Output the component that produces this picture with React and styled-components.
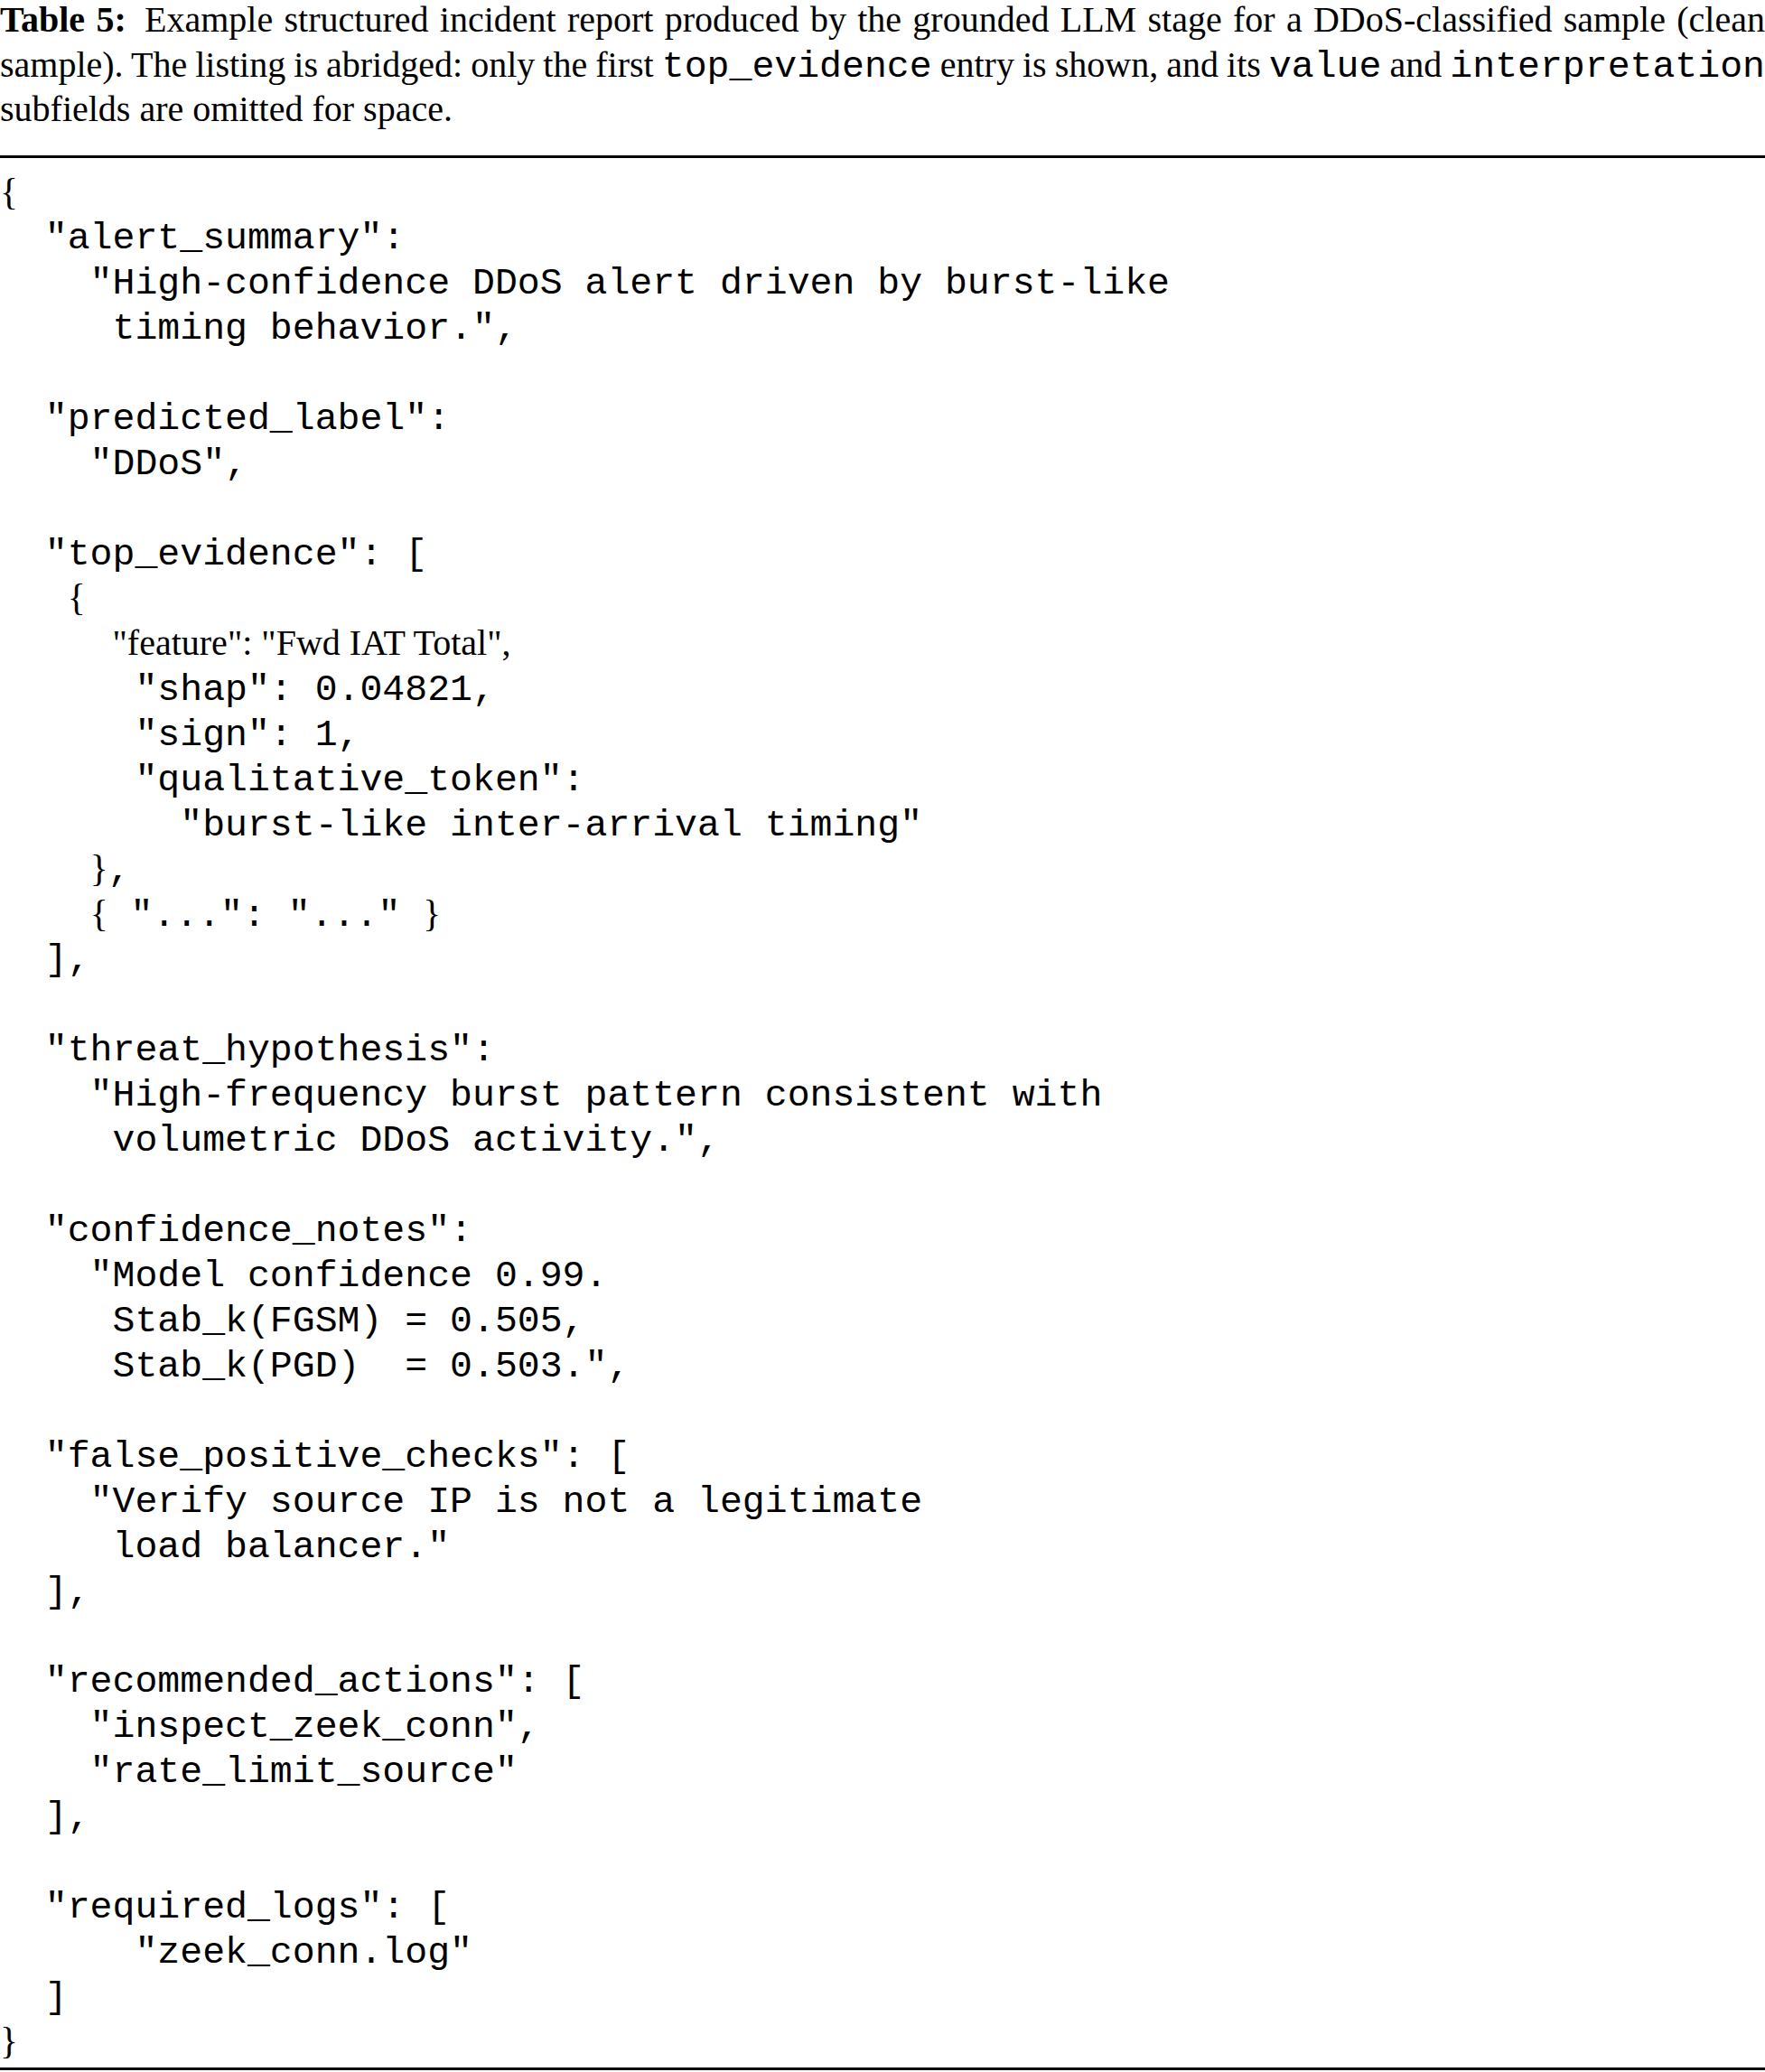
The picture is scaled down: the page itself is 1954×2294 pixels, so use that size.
import React from "react";
import styled, { createGlobalStyle } from "styled-components";

const GlobalStyle = createGlobalStyle`
  html, body {
    margin: 0;
    padding: 0;
    background: #ffffff;
  }
  body {
    color: #000000;
    font-family: "Liberation Serif", "Times New Roman", serif;
  }
`;

const Page = styled.div`
  width: 1954px;
  overflow: hidden;
`;

const Caption = styled.div`
  margin-top: -2.6px;
  font-family: "Liberation Serif", "Times New Roman", serif;
  font-size: 40px;
  line-height: 49.5px;
  color: #000;
`;

const CaptionLine = styled.div`
  text-align: ${(p) => (p.$fill ? "justify" : "left")};
  text-align-last: ${(p) => (p.$fill ? "justify" : "left")};
  word-spacing: ${(p) => p.$ws || 0}px;
`;

const Label = styled.span`
  font-weight: 700;
  margin-right: 8px;
`;

const Mono = styled.span`
  font-family: "Liberation Mono", "Courier New", monospace;
  font-size: 41.5px;
  line-height: 1;
  word-spacing: 0;
`;

const Rule = styled.div`
  height: 3px;
  background: #000;
  margin-top: ${(p) => p.$gap}px;
`;

const Listing = styled.div`
  padding-top: 15px;
  font-family: "Liberation Mono", "Courier New", monospace;
  font-size: 41.5px;
  line-height: 49.95px;
  color: #000;
`;

const Line = styled.div`
  white-space: pre;
  height: 49.95px;
`;

const Brace = styled.span`
  font-family: "Liberation Serif", "Times New Roman", serif;
  font-size: 41.5px;
  line-height: 1;
`;

const SerifText = styled.span`
  font-family: "Liberation Serif", "Times New Roman", serif;
  font-size: 40px;
  line-height: 1;
`;

const B = (c) => ({ brace: c });
const S = (t) => ({ serif: t });

const lines = [
  [B("{")],
  '  "alert_summary":',
  '    "High-confidence DDoS alert driven by burst-like',
  '     timing behavior.",',
  "",
  '  "predicted_label":',
  '    "DDoS",',
  "",
  '  "top_evidence": [',
  ["   ", B("{")],
  ["     ", S('"feature": "Fwd IAT Total",')],
  '      "shap": 0.04821,',
  '      "sign": 1,',
  '      "qualitative_token":',
  '        "burst-like inter-arrival timing"',
  ["    ", B("}"), ","],
  ["    ", B("{"), ' "...": "..." ', B("}")],
  "  ],",
  "",
  '  "threat_hypothesis":',
  '    "High-frequency burst pattern consistent with',
  '     volumetric DDoS activity.",',
  "",
  '  "confidence_notes":',
  '    "Model confidence 0.99.',
  "     Stab_k(FGSM) = 0.505,",
  '     Stab_k(PGD)  = 0.503.",',
  "",
  '  "false_positive_checks": [',
  '    "Verify source IP is not a legitimate',
  '     load balancer."',
  "  ],",
  "",
  '  "recommended_actions": [',
  '    "inspect_zeek_conn",',
  '    "rate_limit_source"',
  "  ],",
  "",
  '  "required_logs": [',
  '      "zeek_conn.log"',
  "  ]",
  [B("}")],
];

function renderSegment(seg, i) {
  if (typeof seg === "string") return <React.Fragment key={i}>{seg}</React.Fragment>;
  if (seg.brace) return <Brace key={i}>{seg.brace}</Brace>;
  return <SerifText key={i}>{seg.serif}</SerifText>;
}

export default function App() {
  return (
    <Page>
      <GlobalStyle />
      <Caption>
        <CaptionLine $fill $ws={-1}>
          <Label>Table 5:</Label> Example structured incident report produced by the grounded LLM
          stage for a DDoS-classified sample (clean
        </CaptionLine>
        <CaptionLine $fill $ws={-2}>
          sample). The listing is abridged: only the first <Mono>top_evidence</Mono> entry is
          shown, and its <Mono>value</Mono> and <Mono>interpretation</Mono>
        </CaptionLine>
        <CaptionLine>subfields are omitted for space.</CaptionLine>
      </Caption>
      <Rule $gap={25.6} />
      <Listing>
        {lines.map((ln, idx) => (
          <Line key={idx}>
            {typeof ln === "string" ? ln || " " : ln.map(renderSegment)}
          </Line>
        ))}
      </Listing>
      <Rule $gap={2} />
    </Page>
  );
}
